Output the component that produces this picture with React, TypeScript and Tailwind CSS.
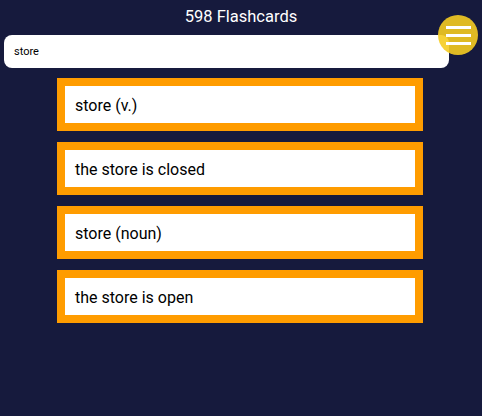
const cards = ["store (v.)", "the store is closed", "store (noun)", "the store is open"];

export default function App() {
  return (
    <div className="relative w-[482px] h-[416px] bg-[#161a3d] font-['Roboto',sans-serif] overflow-hidden">
      <div className="h-[35px] flex items-center justify-center text-white text-[16.5px] pb-[1px]">
        598 Flashcards
      </div>
      <div className="ml-[4px] w-[445px] h-[33px] bg-white rounded-[8px] flex items-center px-[10px] pt-[2px] text-[11px] text-black">
        store
      </div>
      <div className="mt-[10px] ml-[57px] w-[366px] flex flex-col gap-[11px]">
        {cards.map((c) => (
          <div key={c} className="h-[53px] bg-[#ff9c00] p-[8px]">
            <div className="h-full bg-white flex items-center px-[10px] pt-[3px] text-[16px] text-black">
              {c}
            </div>
          </div>
        ))}
      </div>
      <div className="absolute left-[438px] top-[15px] w-[40px] h-[40px] rounded-full bg-[#f5cc21]/90 flex flex-col items-center justify-center gap-[5px]">
        <span className="block w-[25px] h-[3px] bg-white" />
        <span className="block w-[25px] h-[3px] bg-white" />
        <span className="block w-[25px] h-[3px] bg-white" />
      </div>
    </div>
  );
}
